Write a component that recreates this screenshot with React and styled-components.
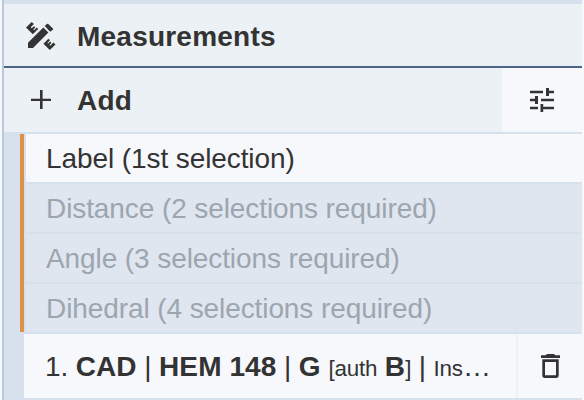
import React from "react";
import styled, {createGlobalStyle} from "styled-components";

const options = [
    {text: "Label (1st selection)", disabled: false},
    {text: "Distance (2 selections required)", disabled: true},
    {text: "Angle (3 selections required)", disabled: true},
    {text: "Dihedral (4 selections required)", disabled: true},
];

export default function App() {
    return (
        <>
            <GlobalStyle/>
            <Panel>
                <Header>
                    <HeaderIcon>
                        <RulerPencilIcon/>
                    </HeaderIcon>
                    <Title>Measurements</Title>
                </Header>
                <AddRow>
                    <AddButton>
                        <HeaderIcon>
                            <PlusIcon/>
                        </HeaderIcon>
                        <Title>Add</Title>
                    </AddButton>
                    <OptionsButton aria-label="Options">
                        <TuneIcon/>
                    </OptionsButton>
                </AddRow>
                <OptionList>
                    {options.map(({text, disabled}) => (
                        <Option key={text} disabled={disabled}>{text}</Option>
                    ))}
                </OptionList>
                <Entry>
                    <EntryLabel>
                        1. <Name>CAD</Name> | <Name>HEM 148</Name> | <Name>G</Name> <Small>[auth</Small> <Name>B</Name><Small>]</Small> | <Small>Ins</Small>…
                    </EntryLabel>
                    <RemoveButton aria-label="Remove">
                        <TrashIcon/>
                    </RemoveButton>
                </Entry>
            </Panel>
        </>
    );
}

function RulerPencilIcon() {
    return (
        <svg width="30" height="28" viewBox="0 0 30 28" fill="#333">
            <path d="M0 5.5 5.7 0 7.9 2 4.7 5.2 5.8 6.3 7.9 4.2 9.3 5.6 7.4 7.5 8.1 8.2 10.8 5.5 12.2 6.9 6.8 12.3z"/>
            <path d="M2 20.8 17.3 5.5 22.4 10.6 7 26H2z"/>
            <path d="M18.7 4.1 20.9 1.9Q21.6 1.4 22.3 2L26.9 6.4Q27.5 7 27 7.6L24.2 9.8z"/>
            <path d="M17.4 21.7 22.4 16.7 24 18.3 21.4 20.9 22.1 21.6 24.1 19.6 25.4 20.9 23.4 22.9 24.2 23.7 27.5 20.4 29.5 22.4 23.8 28z"/>
        </svg>
    );
}

function PlusIcon() {
    return (
        <svg width="20" height="20" viewBox="0 0 20 20" fill="#333">
            <path d="M9 0h2.6v8.7H20v2.2h-8.4V19H9v-8.1H0V8.7h9z"/>
        </svg>
    );
}

function TuneIcon() {
    return (
        <svg width="24" height="24" viewBox="0 0 24 24" fill="#333">
            <path d="M0 2.7h13v2.6H0zM16 0h3v2.7h5v2.6h-5V8h-3zM0 10.7h5V8h3v8H5v-2.7H0zM11 10.7h13v2.6H11zM0 18.7h8v2.6H0zM10.5 16h2.7v2.7H24v2.6H13.2V24h-2.7z"/>
        </svg>
    );
}

function TrashIcon() {
    return (
        <svg width="19" height="24" viewBox="0 0 19 24" fill="#333">
            <path d="M0 1.3h4.7L6 0h7l1.3 1.3H19V4H0z"/>
            <path fillRule="evenodd" d="M1.3 5.3h16.4v16Q17.7 24 15 24H4Q1.3 24 1.3 21.3zM4 8v13.3h11V8z"/>
        </svg>
    );
}

const GlobalStyle = createGlobalStyle`
  * {
    box-sizing: border-box;
  }
  body {
    margin: 0;
    background-color: #f6f8fb;
  }
  button {
    margin: 0;
    border: 0;
    padding: 0;
    font: inherit;
    color: inherit;
  }
`;
const Panel = styled.div`
  width: 580px;
  height: 400px;
  margin-left: 2px;
  padding-top: 4px;
  border-left: 2px solid #b8c9e0;
  background-color: #d6e1ed;
  overflow: hidden;
  color: #333;
  font-family: "Liberation Sans", Arial, sans-serif;
  font-size: 28px;
  line-height: 64px;
`;
const Header = styled.div`
  display: flex;
  align-items: center;
  height: 64px;
  padding-top: 2px;
  border-bottom: 2px solid #4c6586;
  background-color: #ecf1f5;
`;
const HeaderIcon = styled.span`
  display: flex;
  justify-content: center;
  width: 74px;
`;
const Title = styled.span`
  margin-left: -1px;
  padding-top: 1px;
  font-weight: bold;
  letter-spacing: 0.22px;
  line-height: 60px;
`;
const AddRow = styled.div`
  display: flex;
  height: 64px;
  margin-bottom: 2px;
`;
const AddButton = styled.button`
  display: flex;
  align-items: center;
  flex: 1;
  background-color: #ecf1f5;
`;
const OptionsButton = styled.button`
  display: flex;
  align-items: center;
  justify-content: center;
  width: 80px;
  background-color: #f7f8fc;
`;
const OptionList = styled.div`
  display: flex;
  flex-direction: column;
  gap: 2px;
  margin: 0 0 2px 16px;
  border-left: 4px solid #de9149;
  padding-left: 2px;
`;
const Option = styled.button`
  height: 48px;
  padding: 2px 0 0 20px;
  background-color: ${({disabled}) => disabled ? "#dfe6ef" : "#f7f8fc"};
  color: ${({disabled}) => disabled ? "#9da5af" : "#333"};
  letter-spacing: -0.09px;
  line-height: 46px;
  text-align: left;
`;
const Entry = styled.div`
  display: flex;
  height: 64px;
  margin-left: 20px;
  background-color: #f7f8fc;
`;
const EntryLabel = styled.div`
  flex: 1;
  padding: 1px 0 0 21px;
  letter-spacing: -0.15px;
  white-space: nowrap;
`;
const Name = styled.b`
  letter-spacing: 0.1px;
`;
const Small = styled.span`
  font-size: 22.4px;
  letter-spacing: -0.2px;
`;
const RemoveButton = styled.button`
  display: flex;
  align-items: center;
  justify-content: center;
  width: 66px;
  border-left: 2px solid #ecf1f5;
  background-color: #f7f8fc;
`;
